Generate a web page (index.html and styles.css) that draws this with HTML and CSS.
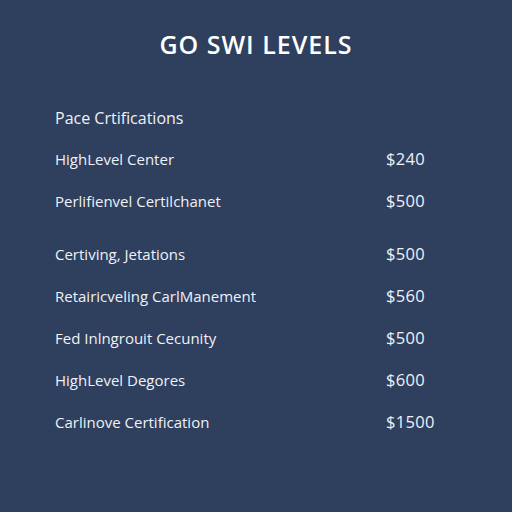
FILE: index.html
```html
<!DOCTYPE html>
<html>
<head>
<meta charset="utf-8">
<link rel="stylesheet" href="styles.css">
</head>
<body>
<main class="page">
  <h1 class="title">GO SWI LEVELS</h1>
  <section class="list">
    <div class="heading">Pace Crtifications</div>
    <div class="group">
      <div class="row"><span class="name">HighLevel Center</span><span class="price">$240</span></div>
      <div class="row"><span class="name">Perlifienvel Certilchanet</span><span class="price">$500</span></div>
    </div>
    <div class="group group-gap">
      <div class="row"><span class="name">Certiving, Jetations</span><span class="price">$500</span></div>
      <div class="row"><span class="name">Retairicveling CarlManement</span><span class="price">$560</span></div>
      <div class="row"><span class="name">Fed Inlngrouit Cecunity</span><span class="price">$500</span></div>
      <div class="row"><span class="name">HighLevel Degores</span><span class="price">$600</span></div>
      <div class="row"><span class="name">Carlinove Certification</span><span class="price">$1500</span></div>
    </div>
  </section>
</main>
</body>
</html>
```

FILE: styles.css
```css
html, body {
  margin: 0;
  padding: 0;
  background: #2f3f5e;
}
body {
  width: 512px;
  height: 512px;
  font-family: "Open Sans", "Liberation Sans", sans-serif;
  color: #eef1f6;
}
.page {
  padding-top: 29px;
}
.title {
  margin: 0;
  font-size: 25px;
  line-height: 30px;
  font-weight: 600;
  text-align: center;
  color: #ffffff;
  letter-spacing: 1px;
}
.list {
  margin-top: 39px;
  padding-left: 55px;
  font-size: 15px;
}
.heading {
  height: 40px;
  line-height: 40px;
  font-size: 16px;
}
.group-gap {
  margin-top: 11px;
}
.row {
  display: grid;
  grid-template-columns: 331px auto;
  align-items: center;
  height: 42px;
  line-height: 42px;
}
.price {
  font-size: 16.5px;
  letter-spacing: 0.3px;
}
```
